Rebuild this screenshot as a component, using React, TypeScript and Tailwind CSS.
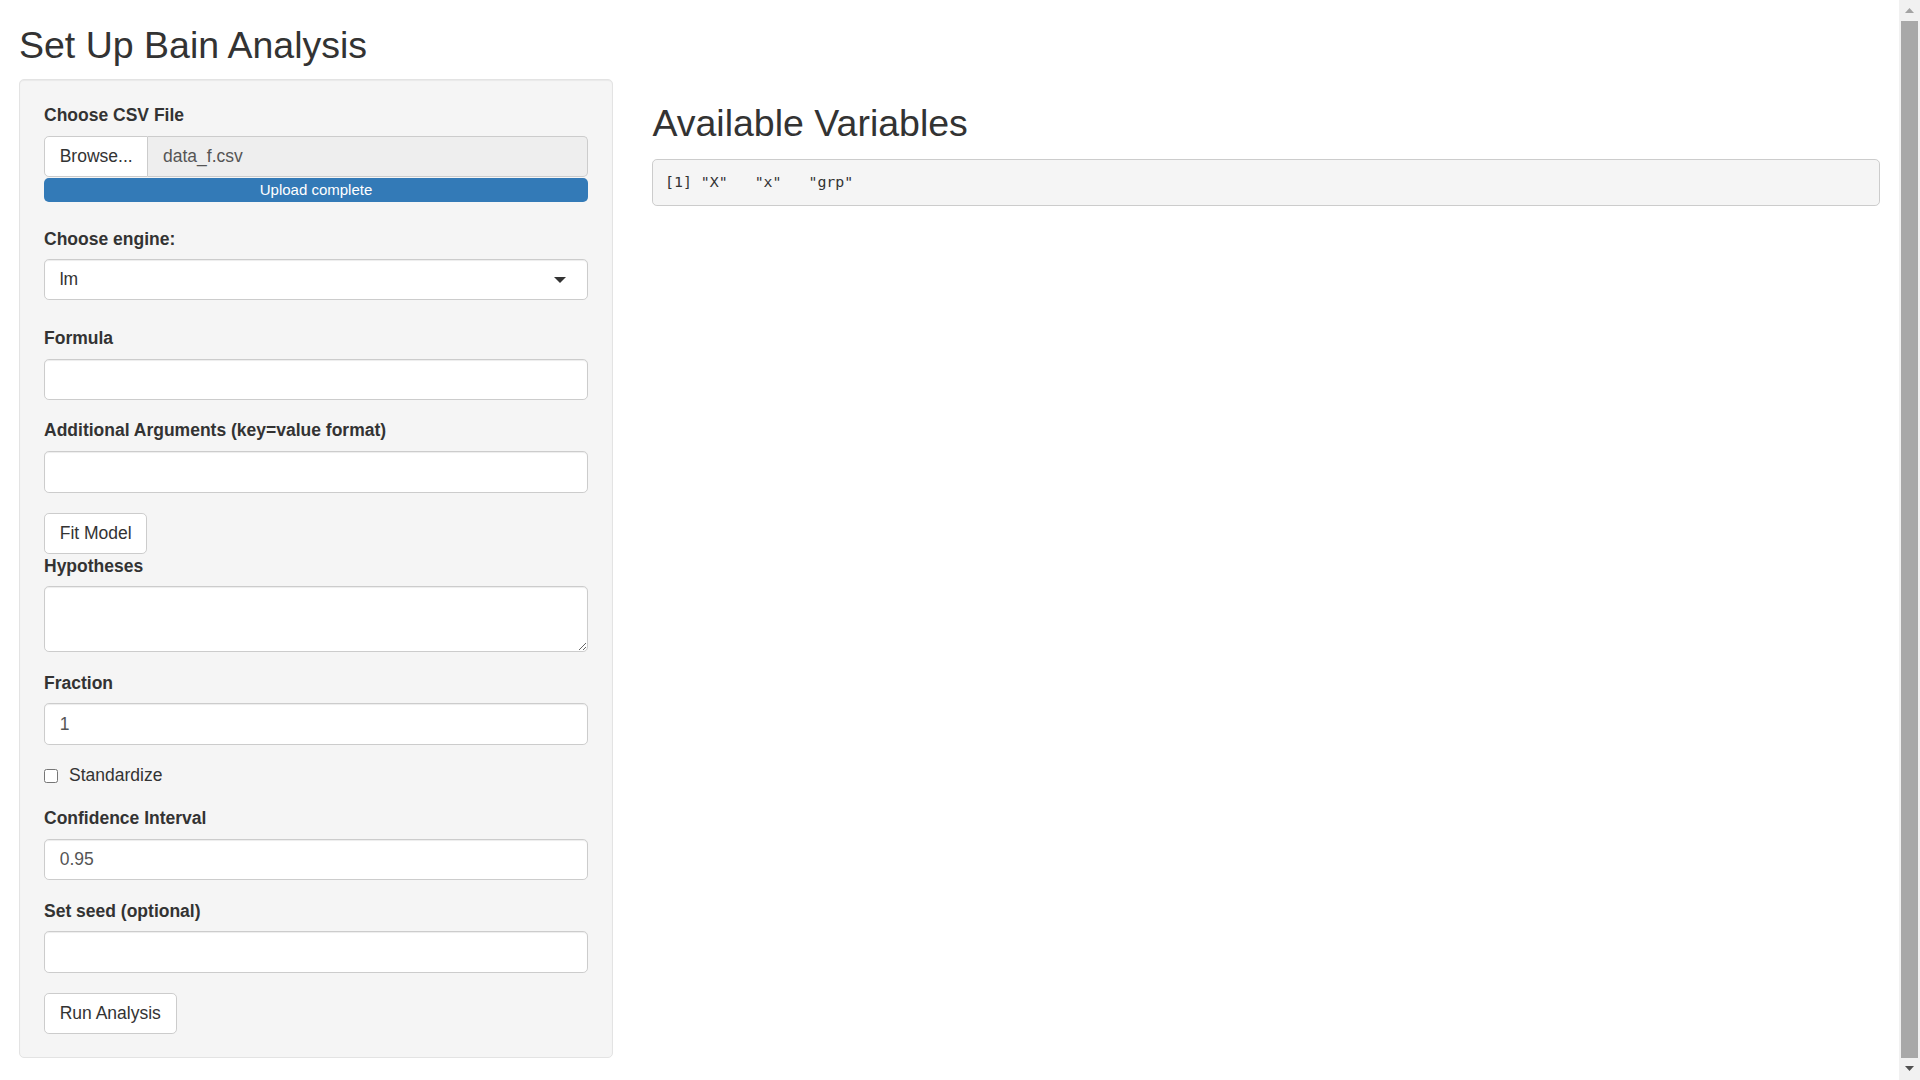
import React from "react";

const fieldBox =
  "w-full h-[41.6px] rounded-[4.9px] border border-[#ccc] bg-white px-[14.7px] text-[#555] shadow-[inset_0_1px_1px_rgba(0,0,0,0.075)] outline-none";

function FieldLabel({ children }: { children: React.ReactNode }) {
  return (
    <label className="block h-[24.5px] leading-[24.5px] font-bold text-[#333] mb-[8px] whitespace-nowrap">
      {children}
    </label>
  );
}

function TextField({ label, value, className = "" }: { label: string; value?: string; className?: string }) {
  return (
    <div className={className}>
      <FieldLabel>{label}</FieldLabel>
      <input type="text" defaultValue={value} className={fieldBox} />
    </div>
  );
}

function PlainButton({ children, className = "" }: { children: React.ReactNode; className?: string }) {
  return (
    <button
      type="button"
      className={
        "self-start h-[41px] rounded-[4.9px] border border-[#ccc] bg-white px-[14.7px] text-[#333] leading-[24.5px] " +
        className
      }
    >
      {children}
    </button>
  );
}

function Scrollbar() {
  return (
    <div className="flex h-screen w-[21px] shrink-0 flex-col items-center bg-[#f1f1f1]">
      <div className="flex h-[20.8px] w-full items-center justify-center">
        <svg width="9" height="5" viewBox="0 0 9 5">
          <path d="M0 5 L4.5 0 L9 5 Z" fill="#a3a3a3" />
        </svg>
      </div>
      <div className="w-[17px] flex-1 bg-[#a8a8a8]" />
      <div className="flex h-[22.5px] w-full items-center justify-center">
        <svg width="9" height="5" viewBox="0 0 9 5">
          <path d="M0 0 L4.5 5 L9 0 Z" fill="#505050" />
        </svg>
      </div>
    </div>
  );
}

export default function App() {
  return (
    <div className="flex h-screen w-full overflow-hidden bg-white font-['Liberation_Sans',Arial,sans-serif] text-[17.5px] leading-[24.5px] text-[#333]">
      <div className="min-w-0 flex-1 px-[19px]">
        <h2 className="mt-[25px] mb-[14px] text-[37.5px] leading-[40.4px] font-normal">Set Up Bain Analysis</h2>

        <div className="flex items-start gap-[39.4px]">
          {/* sidebar form */}
          <form className="flex w-[594px] shrink-0 flex-col rounded-[5px] border border-[#e3e3e3] bg-[#f5f5f5] px-[24px] pt-[23px] pb-[23.3px] shadow-[inset_0_1px_1px_rgba(0,0,0,0.05)]">
            <div>
              <FieldLabel>Choose CSV File</FieldLabel>
              <div className="flex h-[41px]">
                <span className="flex items-center rounded-l-[4.9px] border border-[#ccc] bg-white px-[14.7px] text-[#333]">
                  Browse...
                </span>
                <div className="flex flex-1 items-center rounded-r-[4.9px] border border-l-0 border-[#ccc] bg-[#eee] px-[14.7px] text-[#555]">
                  data_f.csv
                </div>
              </div>
              <div className="mt-[0.6px] h-[24.5px] rounded-[4.9px] bg-[#337ab7] text-center text-[15px] leading-[24.5px] text-white">
                Upload complete
              </div>
            </div>

            <div className="mt-[24.5px]">
              <FieldLabel>Choose engine:</FieldLabel>
              <div className="flex h-[41.4px] items-center rounded-[4.9px] border border-[#ccc] bg-white pl-[14.7px] pr-[20.6px] text-[#333] shadow-[inset_0_1px_1px_rgba(0,0,0,0.075)]">
                <span className="flex-1">lm</span>
                <svg width="12" height="6" viewBox="0 0 12 6">
                  <path d="M0 0 L12 0 L6 6 Z" fill="#333" />
                </svg>
              </div>
            </div>

            <TextField label="Formula" className="mt-[26px]" />
            <TextField label="Additional Arguments (key=value format)" className="mt-[18px]" />

            <PlainButton className="mt-[20.3px]">Fit Model</PlainButton>

            <div>
              <FieldLabel>Hypotheses</FieldLabel>
              <textarea className={fieldBox + " h-[66px] resize-y py-[7px] align-top"} />
            </div>

            <TextField label="Fraction" value="1" className="mt-[18.4px]" />

            <label className="mt-[18.4px] flex h-[24.5px] items-start">
              <input
                type="checkbox"
                className="mt-[6.1px] h-[14px] w-[14px] shrink-0 appearance-none rounded-[2.5px] border border-[#767676] bg-white"
              />
              <span className="ml-[11px] font-normal">Standardize</span>
            </label>

            <TextField label="Confidence Interval" value="0.95" className="mt-[18.4px]" />
            <TextField label="Set seed (optional)" className="mt-[18.4px]" />

            <PlainButton className="mt-[20.3px]">Run Analysis</PlainButton>
          </form>

          {/* main panel */}
          <main className="min-w-0 flex-1">
            <h2 className="mt-[23.3px] mb-[15.6px] text-[37.5px] leading-[40.4px] font-normal">Available Variables</h2>
            <pre className="rounded-[4.9px] border border-[#ccc] bg-[#f5f5f5] px-[11.6px] pt-[12.2px] pb-[11px] font-['DejaVu_Sans_Mono',monospace] text-[14.9px] leading-[21.7px] whitespace-pre text-[#333]">
              {'[1] "X"   "x"   "grp"'}
            </pre>
          </main>
        </div>
      </div>
      <Scrollbar />
    </div>
  );
}
